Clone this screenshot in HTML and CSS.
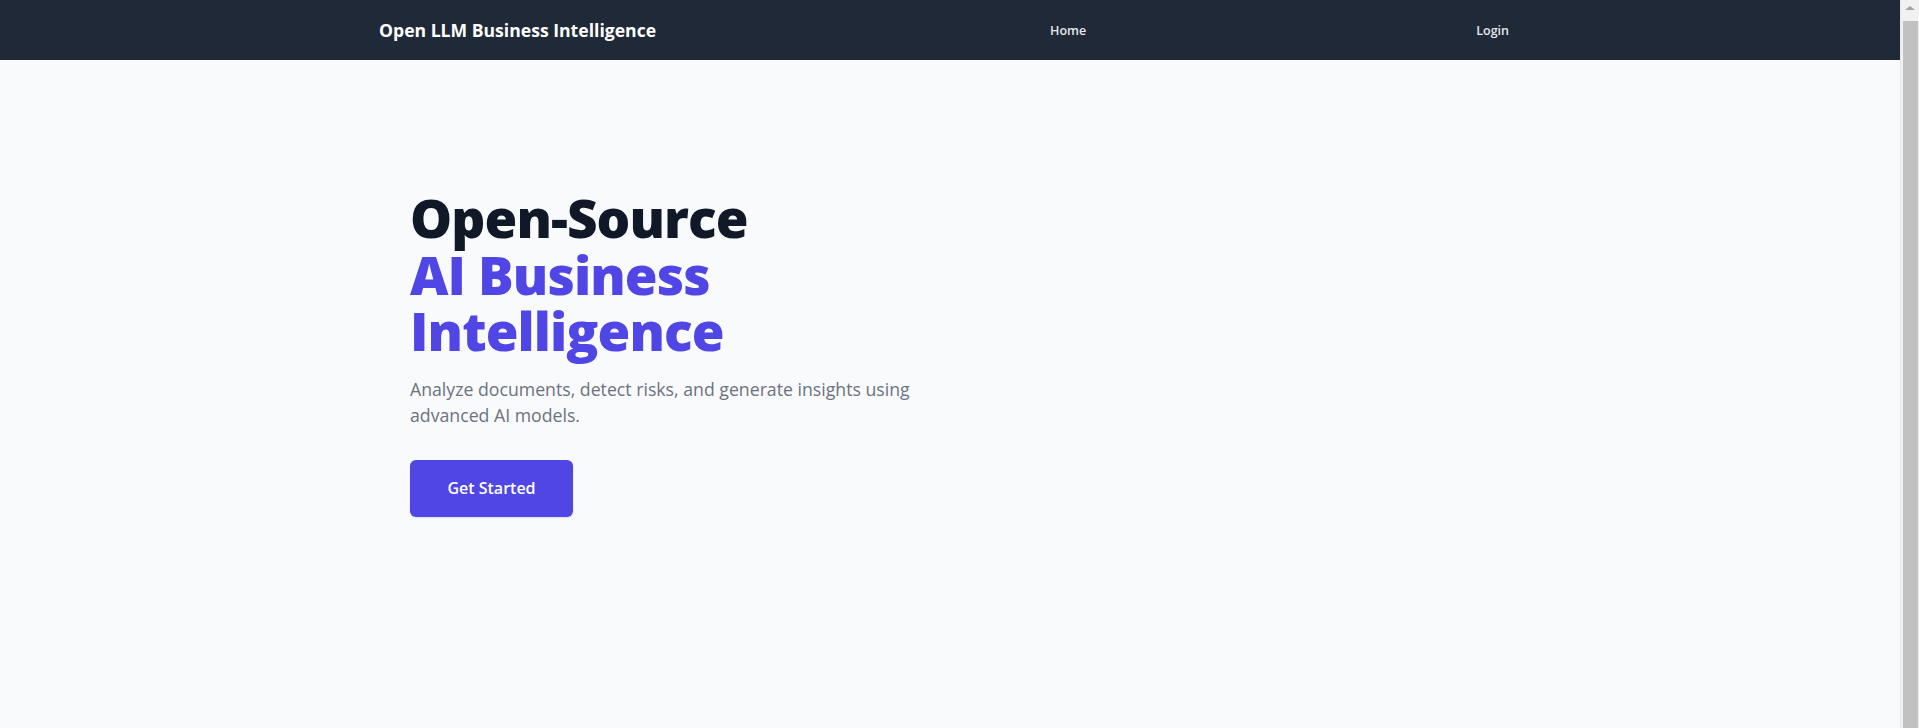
FILE: index.html
```html
<!DOCTYPE html>
<html lang="en">
<head>
<meta charset="utf-8">
<title>Open LLM Business Intelligence</title>
<link rel="stylesheet" href="styles.css">
</head>
<body>
<nav class="nav">
  <div class="nav-inner">
    <a class="brand" href="#">Open LLM Business Intelligence</a>
    <a class="nav-link nav-home" href="#">Home</a>
    <a class="nav-link" href="#">Login</a>
  </div>
</nav>
<main class="hero">
  <div class="hero-inner">
    <h1 class="hero-title">Open-Source<br><span class="accent">AI Business<br>Intelligence</span></h1>
    <p class="hero-text">Analyze documents, detect risks, and generate insights using advanced AI models.</p>
    <a class="btn" href="#">Get Started</a>
  </div>
</main>
<div class="scrollbar" aria-hidden="true">
  <div class="scroll-arrow"></div>
  <div class="scroll-thumb"></div>
</div>
</body>
</html>
```
FILE: styles.css
```css
* { box-sizing: border-box; }
html, body { margin: 0; padding: 0; }
body {
  margin-right: 19px;
  background: #f9fafb;
  font-family: "Open Sans", "Noto Sans", sans-serif;
  color: #111827;
}
a { text-decoration: none; }
.nav {
  background: #1f2937;
  height: 60px;
}
.nav-inner {
  max-width: 1142px;
  height: 60px;
  margin: 0 auto;
  display: flex;
  align-items: center;
  justify-content: space-between;
}
.brand {
  color: #ffffff;
  font-weight: 700;
  font-size: 17.6px;
}
.nav-link {
  color: #e5e7eb;
  font-size: 12.5px;
  font-weight: 600;
  padding: 8px 12px;
}
.nav-home { margin-left: 16px; }
.hero {
  min-height: 100vh;
}
.hero-inner {
  max-width: 1080px;
  margin: 0 auto;
  padding-top: 130px;
}
.hero-title {
  margin: 0;
  font-size: 53px;
  line-height: 56.5px;
  font-weight: 800;
  letter-spacing: -0.9px;
  color: #111827;
}
.accent { color: #4f46e5; }
.hero-text {
  margin: 16px 0 0;
  max-width: 540px;
  font-size: 17.7px;
  line-height: 26px;
  color: #6b7280;
}
.btn {
  display: inline-block;
  margin-top: 32px;
  width: 163px;
  height: 57px;
  line-height: 57px;
  text-align: center;
  background: #4f46e5;
  color: #ffffff;
  font-size: 16px;
  font-weight: 600;
  border-radius: 6px;
  box-shadow: 0 1px 2px rgba(0,0,0,0.12);
}
.scrollbar {
  position: fixed;
  top: 0;
  right: 0;
  width: 19px;
  height: 100vh;
  background: #f1f1f1;
  border-left: 1px solid #e8e8e8;
  display: flex;
  flex-direction: column;
  align-items: center;
}
.scroll-arrow {
  margin-top: 6px;
  width: 0;
  height: 0;
  border-left: 5px solid transparent;
  border-right: 5px solid transparent;
  border-bottom: 4px solid #a3a3a3;
}
.scroll-thumb {
  margin-top: 11px;
  flex: 1;
  width: 15px;
  background: #c1c1c1;
}
```
